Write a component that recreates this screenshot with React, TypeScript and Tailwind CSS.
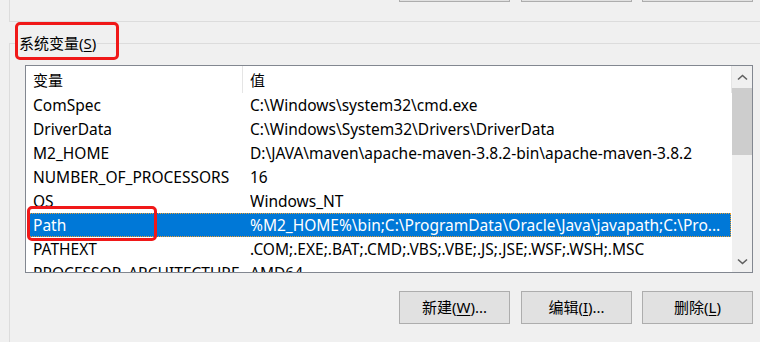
import React from 'react';

type Row = { name: string; value: string };

const rows: Row[] = [
  { name: 'ComSpec', value: 'C:\\Windows\\system32\\cmd.exe' },
  { name: 'DriverData', value: 'C:\\Windows\\System32\\Drivers\\DriverData' },
  { name: 'M2_HOME', value: 'D:\\JAVA\\maven\\apache-maven-3.8.2-bin\\apache-maven-3.8.2' },
  { name: 'NUMBER_OF_PROCESSORS', value: '16' },
  { name: 'OS', value: 'Windows_NT' },
  { name: 'Path', value: '%M2_HOME%\\bin;C:\\ProgramData\\Oracle\\Java\\javapath;C:\\Pro...' },
  { name: 'PATHEXT', value: '.COM;.EXE;.BAT;.CMD;.VBS;.VBE;.JS;.JSE;.WSF;.WSH;.MSC' },
  { name: 'PROCESSOR_ARCHITECTURE', value: 'AMD64' },
];

const WinButton: React.FC<{ children?: React.ReactNode; className?: string }> = ({ children, className }) => (
  <div
    className={
      'w-[111px] h-[33px] shrink-0 border border-[#adadad] bg-[#e1e1e1] flex items-center justify-center text-black ' +
      (className ?? '')
    }
  >
    {children}
  </div>
);

const Chevron: React.FC<{ down?: boolean }> = ({ down }) => (
  <svg width="11" height="7" viewBox="0 0 11 7">
    <path
      d={down ? 'M1 1.5 L5.5 5.5 L10 1.5' : 'M1 5.5 L5.5 1.5 L10 5.5'}
      fill="none"
      stroke="#606060"
      strokeWidth="1.6"
    />
  </svg>
);

const App: React.FC<{}> = () => {
  return (
    <div
      className="relative flex flex-col w-[760px] h-[342px] overflow-hidden bg-[#f0f0f0] text-[15px] text-black"
      style={{ fontFamily: '"Noto Sans", "Noto Sans CJK SC", sans-serif' }}
    >
      {/* user variables group (cut off above) */}
      <div className="ml-[9px] h-[22px] shrink-0 flex flex-col border-l border-b border-[#dcdcdc]">
        <div className="flex pl-[389px] -mt-[31px]">
          <WinButton />
          <WinButton className="ml-[11px]" />
          <WinButton className="ml-[10px]" />
        </div>
      </div>

      {/* system variables group */}
      <div className="ml-[9px] mt-[21px] h-[300px] shrink-0 flex flex-col border-l border-t border-[#dcdcdc]">
        <div className="ml-[8px] -mt-[11px] w-fit bg-[#f0f0f0] px-[1px] leading-[20px]">
          系统变量(<span className="underline underline-offset-2">S</span>)
        </div>

        <div className="ml-[15px] mt-[12px] w-[728px] h-[208px] shrink-0 border border-[#828790] bg-white flex">
          <div className="flex-1 overflow-hidden text-[15.5px]">
            <div className="flex h-[27px] items-center text-[15px]">
              <div className="w-[217px] h-full pl-[7px] pt-[1px] flex items-center border-r border-[#e5e5e5]">变量</div>
              <div className="flex-1 h-full pl-[7px] pt-[1px] flex items-center border-r border-[#e5e5e5]">值</div>
            </div>
            {rows.map((r) => {
              const sel = r.name === 'Path';
              return (
                <div
                  key={r.name}
                  className={
                    'ml-[3px] mr-[1px] h-[24px] pt-[2px] flex items-center whitespace-nowrap ' +
                    (sel ? 'bg-[#0078d7] text-white border border-dotted border-[#f0a030]' : 'border border-transparent')
                  }
                >
                  <div className="w-[220px] pl-[3px] overflow-hidden">{r.name}</div>
                  <div className="flex-1 overflow-hidden">{r.value}</div>
                </div>
              );
            })}
          </div>

          <div className="w-[20px] bg-[#f0f0f0] flex flex-col">
            <div className="h-[22px] flex items-center justify-center">
              <Chevron />
            </div>
            <div className="h-[67px] bg-[#cdcdcd]" />
            <div className="flex-1" />
            <div className="h-[22px] flex items-center justify-center">
              <Chevron down />
            </div>
          </div>
        </div>

        <div className="flex pl-[389px] mt-[18px]">
          <WinButton>
            新建(<span className="underline underline-offset-2">W</span>)...
          </WinButton>
          <WinButton className="ml-[11px]">
            编辑(<span className="underline underline-offset-2">I</span>)...
          </WinButton>
          <WinButton className="ml-[10px]">
            删除(<span className="underline underline-offset-2">L</span>)
          </WinButton>
        </div>
      </div>

      {/* red annotation boxes */}
      <div className="absolute left-[15px] top-[22px] w-[104px] h-[38px] border-[3px] border-[#f01818] rounded-[5px]" />
      <div className="absolute left-[27px] top-[206px] w-[130px] h-[35px] border-[3px] border-[#f01818] rounded-[5px]" />
    </div>
  );
};

export default App;
